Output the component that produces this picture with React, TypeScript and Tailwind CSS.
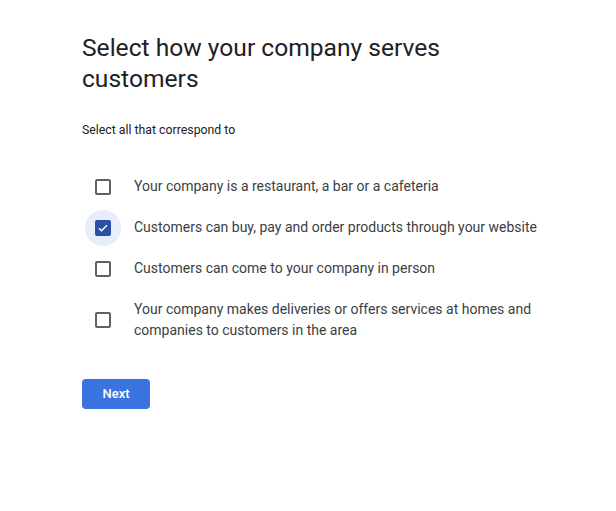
import React, { useState } from "react";

const items = [
  "Your company is a restaurant, a bar or a cafeteria",
  "Customers can buy, pay and order products through your website",
  "Customers can come to your company in person",
  "Your company makes deliveries or offers services at homes and companies to customers in the area",
];

export default function App() {
  const [checked, setChecked] = useState<boolean[]>([false, true, false, false]);
  return (
    <div className="w-[616px] h-[511px] bg-white pl-[82px] pt-[32px]" style={{ fontFamily: "Roboto, 'Liberation Sans', sans-serif" }}>
      <h1 className="text-[24.6px] leading-[31px] text-[#202124] font-normal w-[400px]">
        Select how your company serves customers
      </h1>
      <p className="mt-[28px] text-[12.3px] leading-[16px] text-[#202124]">Select all that correspond to</p>
      <div className="mt-[28px] flex flex-col">
        {items.map((t, i) => (
          <label key={i} className="flex items-center gap-[10px] py-[10px] cursor-pointer" onClick={() => setChecked(c => c.map((v, j) => (j === i ? !v : v)))}>
            <div className="relative w-[42px] h-[16px] flex justify-center items-center">
              {checked[i] && (
                <div className="absolute left-[3px] top-[-10px] w-[36px] h-[36px] rounded-full bg-[#e8eef9]" />
              )}
              {checked[i] ? (
                <div className="relative w-[16px] h-[16px] rounded-[2px] bg-[#2a4fa3] flex items-center justify-center">
                  <svg width="12" height="12" viewBox="0 0 24 24" fill="none" stroke="white" strokeWidth="3">
                    <path d="M4 12.5l5 5L20 6.5" />
                  </svg>
                </div>
              ) : (
                <div className="relative w-[16px] h-[16px] rounded-[2px] border-2 border-[#5f6368]" />
              )}
            </div>
            <span className="w-[420px] text-[14px] leading-[21px] text-[#3c4043]">{t}</span>
          </label>
        ))}
      </div>
      <button className="mt-[28px] w-[68px] h-[30px] rounded-[4px] bg-[#3b74e0] text-white text-[13px] font-medium">Next</button>
    </div>
  );
}
